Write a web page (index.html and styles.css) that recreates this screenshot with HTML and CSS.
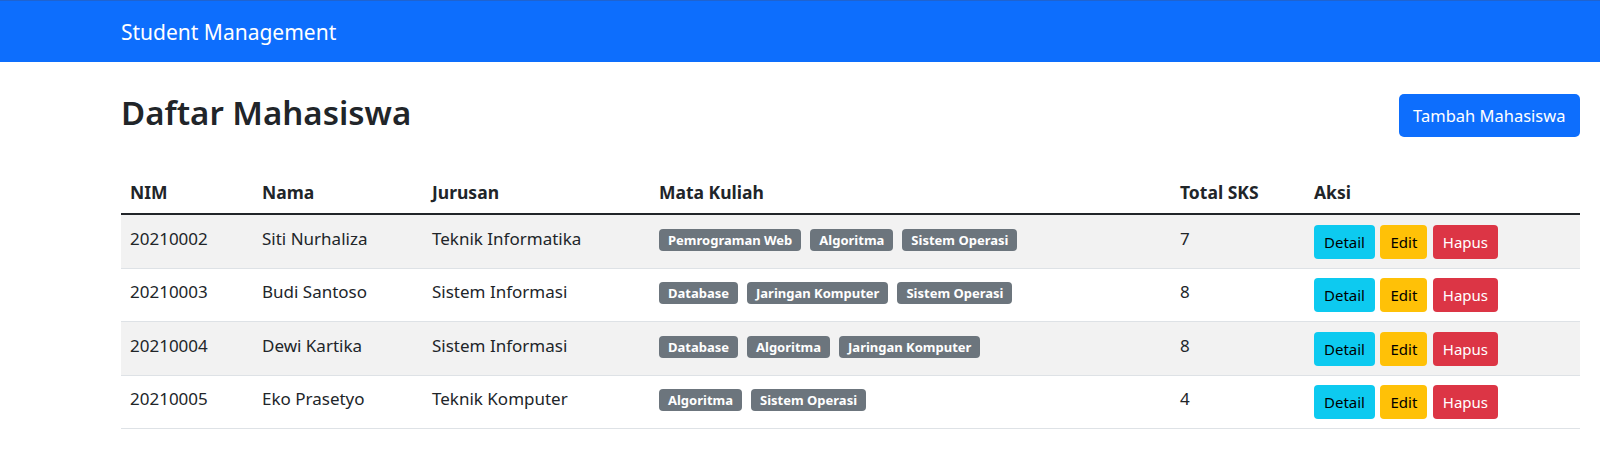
FILE: index.html
```html
<!DOCTYPE html>
<html>
<head>
    <title>Student Management</title>
    <link rel="stylesheet" href="styles.css">
</head>
<body>

<nav class="navbar">
    <div class="container">
        <a class="navbar-brand" href="#">Student Management</a>
    </div>
</nav>

<div class="container">
    <div class="page-head">
        <h1>Daftar Mahasiswa</h1>
        <a class="btn btn-primary" href="#">Tambah Mahasiswa</a>
    </div>

    <table class="table">
        <colgroup>
            <col class="col-nim">
            <col class="col-nama">
            <col class="col-jurusan">
            <col class="col-mk">
            <col class="col-sks">
            <col class="col-aksi">
        </colgroup>
        <thead>
            <tr>
                <th>NIM</th>
                <th>Nama</th>
                <th>Jurusan</th>
                <th>Mata Kuliah</th>
                <th>Total SKS</th>
                <th>Aksi</th>
            </tr>
        </thead>
        <tbody>
            <tr>
                <td>20210002</td>
                <td>Siti Nurhaliza</td>
                <td>Teknik Informatika</td>
                <td>
                    <div class="badges">
                        <span class="badge">Pemrograman Web</span>
                        <span class="badge">Algoritma</span>
                        <span class="badge">Sistem Operasi</span>
                    </div>
                </td>
                <td>7</td>
                <td>
                    <div class="actions">
                        <a class="btn btn-sm btn-info" href="#">Detail</a>
                        <a class="btn btn-sm btn-warning" href="#">Edit</a>
                        <a class="btn btn-sm btn-danger" href="#">Hapus</a>
                    </div>
                </td>
            </tr>
            <tr>
                <td>20210003</td>
                <td>Budi Santoso</td>
                <td>Sistem Informasi</td>
                <td>
                    <div class="badges">
                        <span class="badge">Database</span>
                        <span class="badge">Jaringan Komputer</span>
                        <span class="badge">Sistem Operasi</span>
                    </div>
                </td>
                <td>8</td>
                <td>
                    <div class="actions">
                        <a class="btn btn-sm btn-info" href="#">Detail</a>
                        <a class="btn btn-sm btn-warning" href="#">Edit</a>
                        <a class="btn btn-sm btn-danger" href="#">Hapus</a>
                    </div>
                </td>
            </tr>
            <tr>
                <td>20210004</td>
                <td>Dewi Kartika</td>
                <td>Sistem Informasi</td>
                <td>
                    <div class="badges">
                        <span class="badge">Database</span>
                        <span class="badge">Algoritma</span>
                        <span class="badge">Jaringan Komputer</span>
                    </div>
                </td>
                <td>8</td>
                <td>
                    <div class="actions">
                        <a class="btn btn-sm btn-info" href="#">Detail</a>
                        <a class="btn btn-sm btn-warning" href="#">Edit</a>
                        <a class="btn btn-sm btn-danger" href="#">Hapus</a>
                    </div>
                </td>
            </tr>
            <tr>
                <td>20210005</td>
                <td>Eko Prasetyo</td>
                <td>Teknik Komputer</td>
                <td>
                    <div class="badges">
                        <span class="badge">Algoritma</span>
                        <span class="badge">Sistem Operasi</span>
                    </div>
                </td>
                <td>4</td>
                <td>
                    <div class="actions">
                        <a class="btn btn-sm btn-info" href="#">Detail</a>
                        <a class="btn btn-sm btn-warning" href="#">Edit</a>
                        <a class="btn btn-sm btn-danger" href="#">Hapus</a>
                    </div>
                </td>
            </tr>
        </tbody>
    </table>
</div>

</body>
</html>
```

FILE: styles.css
```css
body { margin: 0; font-family: "Noto Sans", "Open Sans", sans-serif; font-size: 17px; color: #212529; background: #fff; }
a { text-decoration: none; }

.container { width: 1459px; margin-left: 121px; }

.navbar { background-color: #0d6efd; border-top: 1px solid #1f63d0; height: 61px; display: flex; align-items: center; }
.navbar-brand { color: #fff; font-size: 21px; }

.page-head { display: flex; justify-content: space-between; align-items: center; margin-top: 32px; }
.page-head h1 { margin: -6px 0 0; font-size: 33px; font-weight: 600; line-height: 43px; }

.btn { display: inline-block; border-radius: 5px; }
.btn-primary { background-color: #0d6efd; color: #fff; font-size: 16.5px; line-height: 25px; padding: 9px 14.5px; }
.btn-sm { font-size: 15px; line-height: 22px; padding: 6px 10px; border-radius: 4px; color: #000; }
.btn-info { background-color: #0dcaf0; }
.btn-warning { background-color: #ffc107; }
.btn-danger { background-color: #dc3545; color: #fff; }

.table { width: 100%; border-collapse: collapse; margin-top: 34px; table-layout: fixed; }
.col-nim { width: 132px; }
.col-nama { width: 170px; }
.col-jurusan { width: 227px; }
.col-mk { width: 521px; }
.col-sks { width: 134px; }
.table th, .table td { text-align: left; padding: 9px; }
.table th { font-size: 17.5px; font-weight: 700; vertical-align: middle; border-bottom: 2px solid #212529; }
.table td { vertical-align: top; padding-top: 9.5px; line-height: 27px; border-bottom: 1px solid #dee2e6; }
.table tbody tr:nth-child(odd) { background-color: #f2f2f2; }

.badges { display: flex; gap: 9px; margin-top: 4px; }
.badge { background-color: #6c757d; color: #fff; font-size: 13px; font-weight: 700; line-height: 16px; padding: 3px 9px; border-radius: 4px; }

.actions { display: flex; gap: 5.5px; }
```
